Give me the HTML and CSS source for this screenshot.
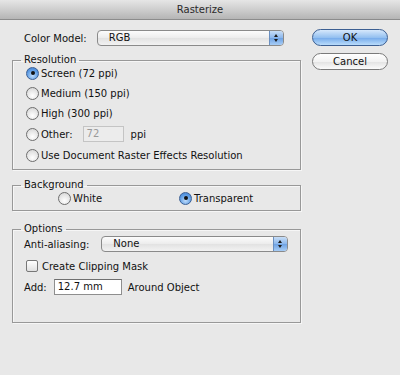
FILE: index.html
```html
<!DOCTYPE html>
<html lang="en">
<head>
    <meta charset="UTF-8">
    <title>Rasterize</title>
    <link rel="stylesheet" href="styles.css">
</head>
<body>
    <div class="titlebar">Rasterize</div>
    <div class="content">
        <div class="main">
            <div class="model-row">
                <span class="label">Color Model:</span>
                <div class="select"><span class="value">RGB</span><span class="stepper"><i class="up"></i><i class="down"></i></span></div>
            </div>

            <fieldset class="group resolution">
                <legend>Resolution</legend>
                <div class="option"><span class="radio checked"></span>Screen (72 ppi)</div>
                <div class="option"><span class="radio"></span>Medium (150 ppi)</div>
                <div class="option"><span class="radio"></span>High (300 ppi)</div>
                <div class="option other">
                    <span class="radio"></span>Other:
                    <span class="field disabled">72</span>
                    <span class="unit">ppi</span>
                </div>
                <div class="option"><span class="radio"></span>Use Document Raster Effects Resolution</div>
            </fieldset>

            <fieldset class="group background">
                <legend>Background</legend>
                <div class="choices">
                    <div class="option"><span class="radio"></span>White</div>
                    <div class="option transparent"><span class="radio checked"></span>Transparent</div>
                </div>
            </fieldset>

            <fieldset class="group options">
                <legend>Options</legend>
                <div class="aa-row">
                    <span class="label">Anti-aliasing:</span>
                    <div class="select"><span class="value">None</span><span class="stepper"><i class="up"></i><i class="down"></i></span></div>
                </div>
                <div class="option check-row"><span class="checkbox"></span>Create Clipping Mask</div>
                <div class="add-row">
                    <span class="label">Add:</span>
                    <span class="field">12.7 mm</span>
                    <span class="unit">Around Object</span>
                </div>
            </fieldset>
        </div>

        <div class="actions">
            <button class="btn default">OK</button>
            <button class="btn">Cancel</button>
        </div>
    </div>
</body>
</html>
```

FILE: styles.css
```css
body {
    margin: 0;
    width: 400px;
    height: 375px;
    background: #e8e8e8;
    font-family: "DejaVu Sans", sans-serif;
    font-size: 10px;
    color: #111;
    overflow: hidden;
}
.titlebar {
    height: 19px;
    line-height: 19px;
    text-align: center;
    color: #2a2a2a;
    background: linear-gradient(#e6e6e6, #c9c9c9 60%, #b5b5b5);
    border-bottom: 1px solid #8c8c8c;
}
.content {
    display: flex;
    padding-top: 9px;
}
.main {
    width: 289px;
    padding-left: 12px;
}
.label {
    display: inline-block;
}
.model-row, .aa-row {
    display: flex;
    align-items: center;
    height: 16px;
    margin-top: 1px;
    padding-left: 12px;
}
.model-row .select {
    margin-left: 10px;
}
.select {
    display: flex;
    width: 185px;
    height: 14px;
    border: 1px solid #8a8a8a;
    border-radius: 4px;
    background: linear-gradient(#fcfcfc, #ececec 50%, #e2e2e2 51%, #f2f2f2);
    overflow: hidden;
}
.select .value {
    flex: 1;
    line-height: 14px;
    padding-left: 11px;
}
.stepper {
    position: relative;
    width: 13px;
    border-left: 1px solid #6a8fc0;
    background: linear-gradient(#c8def7, #8ab6ec 50%, #6ea2e4 51%, #a7cdf6);
}
.stepper i {
    position: absolute;
    left: 4px;
    width: 0;
    height: 0;
    border-left: 2.5px solid transparent;
    border-right: 2.5px solid transparent;
}
.stepper .up {
    top: 3px;
    border-bottom: 3px solid #1c1c1c;
}
.stepper .down {
    top: 8px;
    border-top: 3px solid #1c1c1c;
}
.group {
    margin: 0;
    padding: 0 0 0 13px;
    border: 1px solid #989898;
    box-shadow: inset 1px 1px 0 #f6f6f6, 1px 1px 0 #f6f6f6;
}
.group legend {
    margin-left: -5px;
    padding: 0 3px;
    line-height: 12px;
}
.resolution {
    margin-top: 8px;
    padding-bottom: 7px;
}
.option {
    display: flex;
    align-items: center;
    height: 14px;
    margin-top: 6px;
}
.resolution .option:first-of-type {
    margin-top: 0;
}
.option.other {
    height: 16px;
}
.radio {
    width: 11px;
    height: 11px;
    margin-right: 2px;
    border: 1px solid #6e6e6e;
    border-radius: 50%;
    background: radial-gradient(circle at 50% 70%, #ffffff, #e4e4e4 60%, #cfcfcf);
    position: relative;
}
.radio.checked {
    border-color: #3b5f94;
    background: radial-gradient(circle at 50% 70%, #bfdcfb, #5c9be3 60%, #3f7ed0);
}
.radio.checked::after {
    content: "";
    position: absolute;
    left: 3.5px;
    top: 3.5px;
    width: 4px;
    height: 4px;
    border-radius: 50%;
    background: #111;
}
.field {
    display: inline-block;
    height: 14px;
    line-height: 14px;
    padding-left: 3px;
    border: 1px solid #8e8e8e;
    border-top-color: #6f6f6f;
    background: #fff;
    box-sizing: content-box;
}
.other .field {
    width: 36px;
    margin-left: 10px;
}
.field.disabled {
    color: #9a9a9a;
    background: #ececec;
    border-color: #c4c4c4;
}
.other .unit {
    margin-left: 7px;
}
.background {
    margin-top: 9px;
    padding-bottom: 5px;
}
.choices {
    display: flex;
    padding-left: 32px;
}
.choices .option {
    margin-top: 0;
}
.choices .transparent {
    margin-left: 77px;
}
.options {
    margin-top: 12px;
    padding-left: 0;
    padding-bottom: 27px;
}
.options legend {
    margin-left: 8px;
}
.options .aa-row {
    padding-left: 11px;
}
.aa-row .select {
    margin-left: 12px;
}
.check-row {
    margin-top: 7px;
    padding-left: 13px;
}
.checkbox {
    width: 10px;
    height: 10px;
    margin-right: 4px;
    border: 1px solid #777;
    border-radius: 2px;
    background: linear-gradient(#ffffff, #e0e0e0);
}
.add-row {
    display: flex;
    align-items: center;
    height: 16px;
    margin-top: 6px;
    padding-left: 11px;
}
.add-row .field {
    width: 63px;
    margin-left: 7px;
}
.add-row .unit {
    margin-left: 6px;
}
.actions {
    display: flex;
    flex-direction: column;
    gap: 7px;
    margin-left: 11px;
    padding-top: 0;
}
.btn {
    width: 76px;
    height: 17px;
    padding: 0;
    font-family: inherit;
    font-size: 10px;
    color: #111;
    border: 1px solid #7a7a7a;
    border-radius: 9px;
    background: linear-gradient(#ffffff, #f2f2f2 50%, #e2e2e2 51%, #fbfbfb);
}
.btn.default {
    border-color: #3c5f92;
    background: linear-gradient(#d6e8fb, #94c0f0 50%, #73a9ea 51%, #b9dcfb);
}
```
